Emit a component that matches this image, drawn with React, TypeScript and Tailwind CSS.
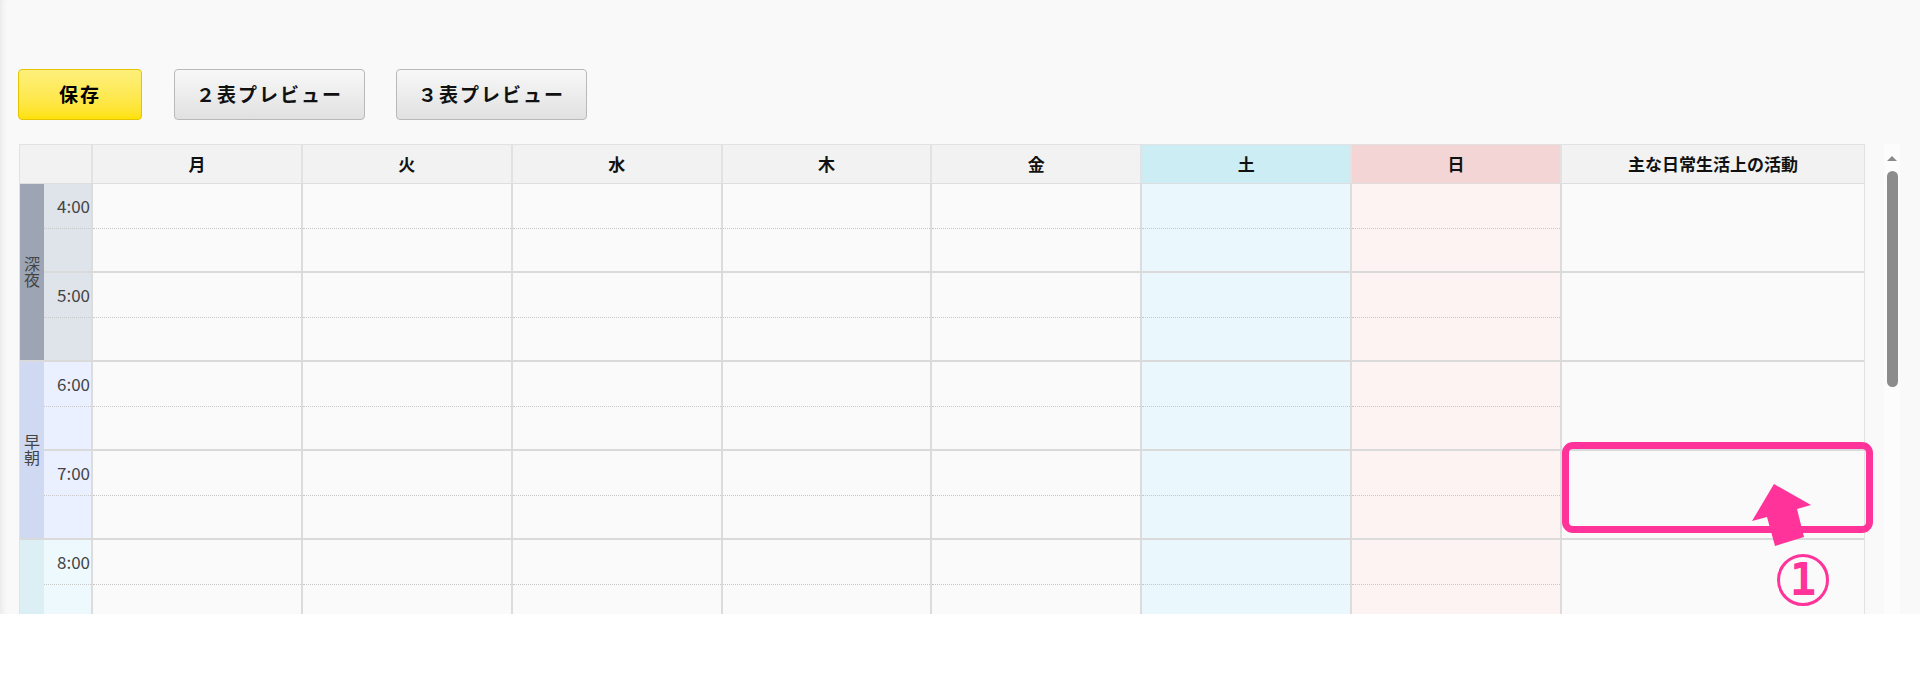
import React from 'react';

// 週間スケジュール表（日常生活上の活動）

const days = ['月', '火', '水', '木', '金', '土', '日'];

const groups = [
  { label: '深夜', labelBg: 'bg-[#9da4b4]', timeBg: 'bg-[#dfe3ea]', hours: ['4:00', '5:00'] },
  { label: '早朝', labelBg: 'bg-[#cfd9f2]', timeBg: 'bg-[#eaf0ff]', hours: ['6:00', '7:00'] },
  { label: '', labelBg: 'bg-[#dbeff5]', timeBg: 'bg-[#eef9fd]', hours: ['8:00'] },
];

const font = { fontFamily: '"Noto Sans CJK JP", "Noto Sans", sans-serif' };

function dayCellBg(d: string) {
  if (d === '土') return 'bg-[#eaf8fd]';
  if (d === '日') return 'bg-[#fdf3f2]';
  return 'bg-[#fafafa]';
}

function dayHeadBg(d: string) {
  if (d === '土') return 'bg-[#cbedf3]';
  if (d === '日') return 'bg-[#f4d5d6]';
  return 'bg-[#f2f2f2]';
}

function HourRow({ time, timeBg }: { time: string; timeBg: string }) {
  return (
    <div className="flex h-[89px] border-b-2 border-[#dadada]">
      {/* 時刻 */}
      <div className={`w-[47px] flex flex-col ${timeBg}`}>
        <div className="h-[45px] border-b border-dotted border-[#c8c8c8] flex items-center justify-end pr-[1px] text-[17px] leading-[20px] text-[#444]">
          {time}
        </div>
        <div className="flex-1" />
      </div>
      {days.map((d) => (
        <div key={d} className={`flex-1 flex flex-col border-l-2 border-[#dcdcdc] ${dayCellBg(d)}`}>
          <div className="h-[45px] border-b border-dotted border-[#c8c8c8]" />
          <div className="flex-1" />
        </div>
      ))}
      {/* 活動欄 */}
      <div className="w-[304px] border-l-2 border-[#dcdcdc] bg-[#fafafa]" />
    </div>
  );
}

export default function App() {
  return (
    <div className="relative w-full h-[699px] bg-white" style={font}>
      <div className="h-[614px] bg-[#f9f9f9] overflow-hidden shadow-[inset_6px_0_6px_-4px_rgba(0,0,0,0.07)]">
        {/* ボタン */}
        <div className="flex items-center pt-[69px] pl-[18px] gap-[32px]">
          <button className="w-[124px] h-[51px] rounded-[4px] border border-[#e3c400] bg-gradient-to-b from-[#fdf07a] to-[#ffe200] text-[19px] font-bold tracking-[2px] text-black">
            保存
          </button>
          <button className="w-[191px] h-[51px] rounded-[4px] border border-[#b9b9b9] bg-gradient-to-b from-[#f8f8f8] to-[#e1e1e1] text-[19px] font-bold tracking-[2px] text-[#111]">
            ２表プレビュー
          </button>
          <button className="w-[191px] h-[51px] -ml-[1px] rounded-[4px] border border-[#b9b9b9] bg-gradient-to-b from-[#f8f8f8] to-[#e1e1e1] text-[19px] font-bold tracking-[2px] text-[#111]">
            ３表プレビュー
          </button>
        </div>

        <div className="flex mt-[24px] ml-[19px]">
          {/* 表 */}
          <div className="w-[1846px] border-x border-t border-[#e2e2e2]">
            {/* 見出し */}
            <div className="flex h-[39px] border-b border-[#dedede] text-[17px] font-bold text-[#111]">
              <div className="w-[71px] bg-[#f2f2f2]" />
              {days.map((d) => (
                <div key={d} className={`flex-1 flex items-center justify-center border-l-2 border-[#e2e2e2] ${dayHeadBg(d)}`}>
                  {d}
                </div>
              ))}
              <div className="w-[304px] flex items-center justify-center border-l-2 border-[#e2e2e2] bg-[#f2f2f2]">
                主な日常生活上の活動
              </div>
            </div>

            {groups.map((g, i) => (
              <div key={i} className="flex">
                <div className={`w-[24px] flex items-center justify-center border-b-2 border-[#dadada] ${g.labelBg}`}>
                  {g.label && (
                    <span className="[writing-mode:vertical-rl] text-[16px] leading-[16px] text-[#444]">
                      {g.label}
                    </span>
                  )}
                </div>
                <div className="flex-1 flex flex-col">
                  {g.hours.map((h) => (
                    <HourRow key={h} time={h} timeBg={g.timeBg} />
                  ))}
                </div>
              </div>
            ))}
          </div>

          {/* スクロールバー */}
          <div className="ml-[19px] w-[16px] bg-[#fcfcfc] flex flex-col items-center pt-[12px]">
            <div className="w-0 h-0 border-x-[5px] border-x-transparent border-b-[5px] border-b-[#8a8a8a]" />
            <div className="mt-[10px] w-[11px] h-[216px] rounded-full bg-[#8c8c8c]" />
          </div>
        </div>
      </div>

      {/* 注釈 */}
      <div className="absolute left-[1562px] top-[442px] w-[311px] h-[91px] border-[7px] border-[#ff3399] rounded-[11px]" />
      <svg className="absolute left-0 top-0 pointer-events-none" width="1920" height="699">
        <polygon
          points="1774,484 1811,505 1797,509 1804,537 1775,546 1767,517 1752,521"
          fill="#ff3399"
        />
      </svg>
      <div className="absolute left-[1777px] top-[554px] w-[52px] h-[52px] rounded-full border-[3px] border-[#ff3399] flex items-center justify-center">
        <span
          className="text-[44px] font-bold text-[#ff3399] leading-none"
          style={{ fontFamily: '"DejaVu Sans Mono", monospace' }}
        >
          1
        </span>
      </div>
    </div>
  );
}
